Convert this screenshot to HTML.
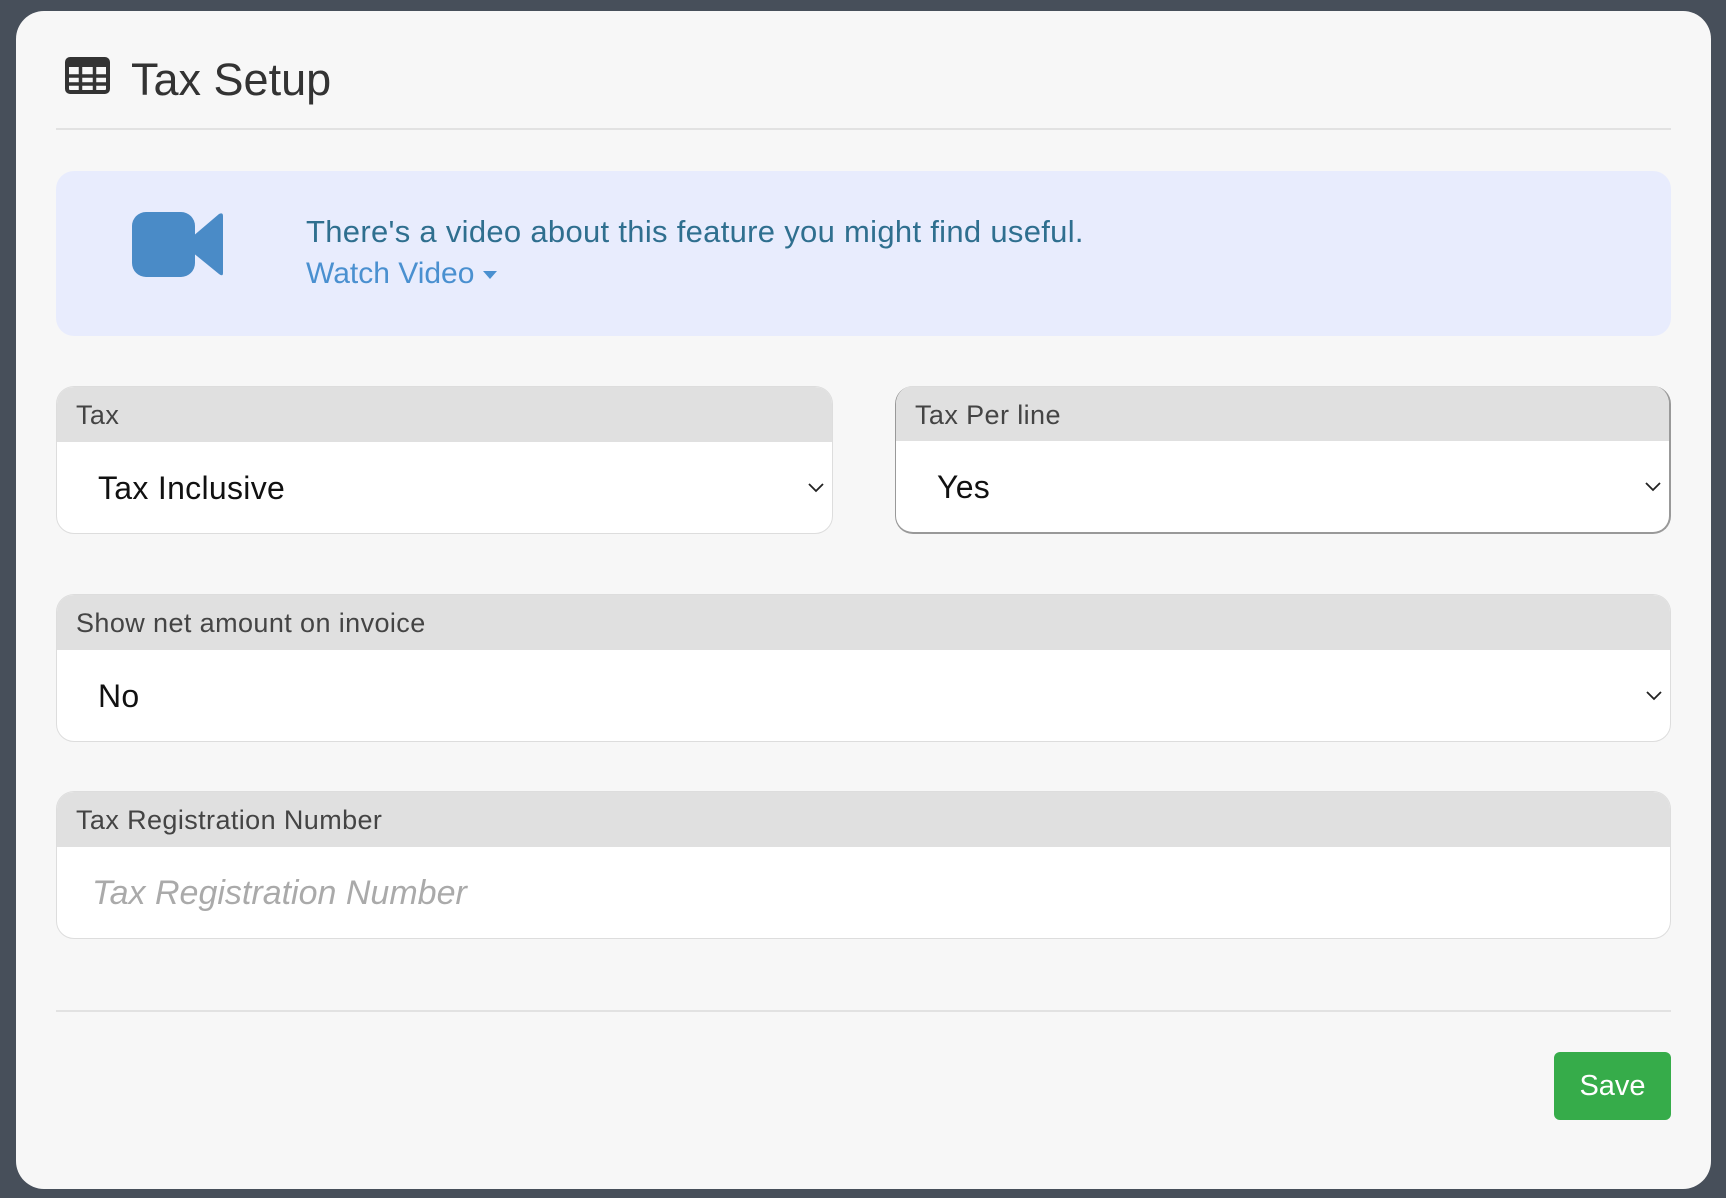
<!DOCTYPE html>
<html><head><meta charset="utf-8"><style>
*{box-sizing:border-box;margin:0;padding:0}
body{width:1726px;height:1198px;background:#474f5a;font-family:"Liberation Sans",sans-serif;position:relative;overflow:hidden}
.card{position:absolute;left:16px;top:11px;width:1695px;height:1178px;background:#f7f7f7;border-radius:28px}
.a{position:absolute}
.hr{position:absolute;left:56px;width:1615px;height:2px;background:#e2e2e2}
.grp{position:absolute;border:1px solid #ddd;border-radius:18px;overflow:hidden;background:#fff}
.lab{background:#e0e0e0;height:55px;padding-left:19px;font-size:27px;letter-spacing:0.4px;color:#444;line-height:56px}
.val{font-size:32px;letter-spacing:0.3px;color:#111;padding-left:41px;line-height:92px;position:relative}
.chev{position:absolute;right:7px;top:40px}
</style></head><body>
<div class="card"></div>
<svg class="a" style="left:65px;top:57px" width="45" height="37" viewBox="0 0 45 37"><rect x="2" y="2" width="41" height="33" rx="3" fill="none" stroke="#333" stroke-width="4"/><rect x="2" y="2" width="41" height="8" fill="#333"/><path d="M2 19h41M2 27h41M15.5 9v26M29.5 9v26" stroke="#333" stroke-width="3.5"/></svg>
<div class="a" style="left:131px;top:54px;font-size:45px;color:#333">Tax Setup</div>
<div class="hr" style="top:128px"></div>
<div class="a" style="left:56px;top:171px;width:1615px;height:165px;background:#e8ecfd;border-radius:18px"></div>
<svg class="a" style="left:132px;top:212px" width="91" height="65" viewBox="0 0 91 65"><rect x="0" y="0" width="63" height="65" rx="14" fill="#4a8bc7"/><path d="M60 25 L87 2 Q91 0 91 4 V61 Q91 65 87 62 L60 40Z" fill="#4a8bc7"/></svg>
<div class="a" style="left:306px;top:214px;font-size:31px;letter-spacing:0.3px;color:#2f6f8f">There's a video about this feature you might find useful.</div>
<div class="a" style="left:306px;top:257px;font-size:30px;color:#4a90d0">Watch Video <span style="display:inline-block;width:0;height:0;border-left:7px solid transparent;border-right:7px solid transparent;border-top:8px solid #4a90d0;vertical-align:middle"></span></div>

<div class="grp" style="left:56px;top:386px;width:777px;height:148px"><div class="lab">Tax</div><div class="val">Tax Inclusive<svg class="chev" width="18" height="12" viewBox="0 0 18 12"><path d="M2 2l7 7 7-7" fill="none" stroke="#222" stroke-width="1.8"/></svg></div></div>
<div class="grp" style="left:895px;top:386px;width:776px;height:148px;border-color:#999;border-width:0 2px 2px 1px"><div class="lab" style="border-top:1px solid #ddd">Tax Per line</div><div class="val">Yes<svg class="chev" width="18" height="12" viewBox="0 0 18 12"><path d="M2 2l7 7 7-7" fill="none" stroke="#222" stroke-width="1.8"/></svg></div></div>
<div class="grp" style="left:56px;top:594px;width:1615px;height:148px"><div class="lab">Show net amount on invoice</div><div class="val">No<svg class="chev" width="18" height="12" viewBox="0 0 18 12"><path d="M2 2l7 7 7-7" fill="none" stroke="#222" stroke-width="1.8"/></svg></div></div>
<div class="grp" style="left:56px;top:791px;width:1615px;height:148px"><div class="lab">Tax Registration Number</div><div class="val" style="font-style:italic;color:#aaa;padding-left:35px;font-size:34px;letter-spacing:0">Tax Registration Number</div></div>
<div class="hr" style="top:1010px"></div>
<div class="a" style="left:1554px;top:1052px;width:117px;height:68px;background:#36ac4a;border-radius:6px;color:#fff;font-size:29px;text-align:center;line-height:68px">Save</div>
</body></html>
